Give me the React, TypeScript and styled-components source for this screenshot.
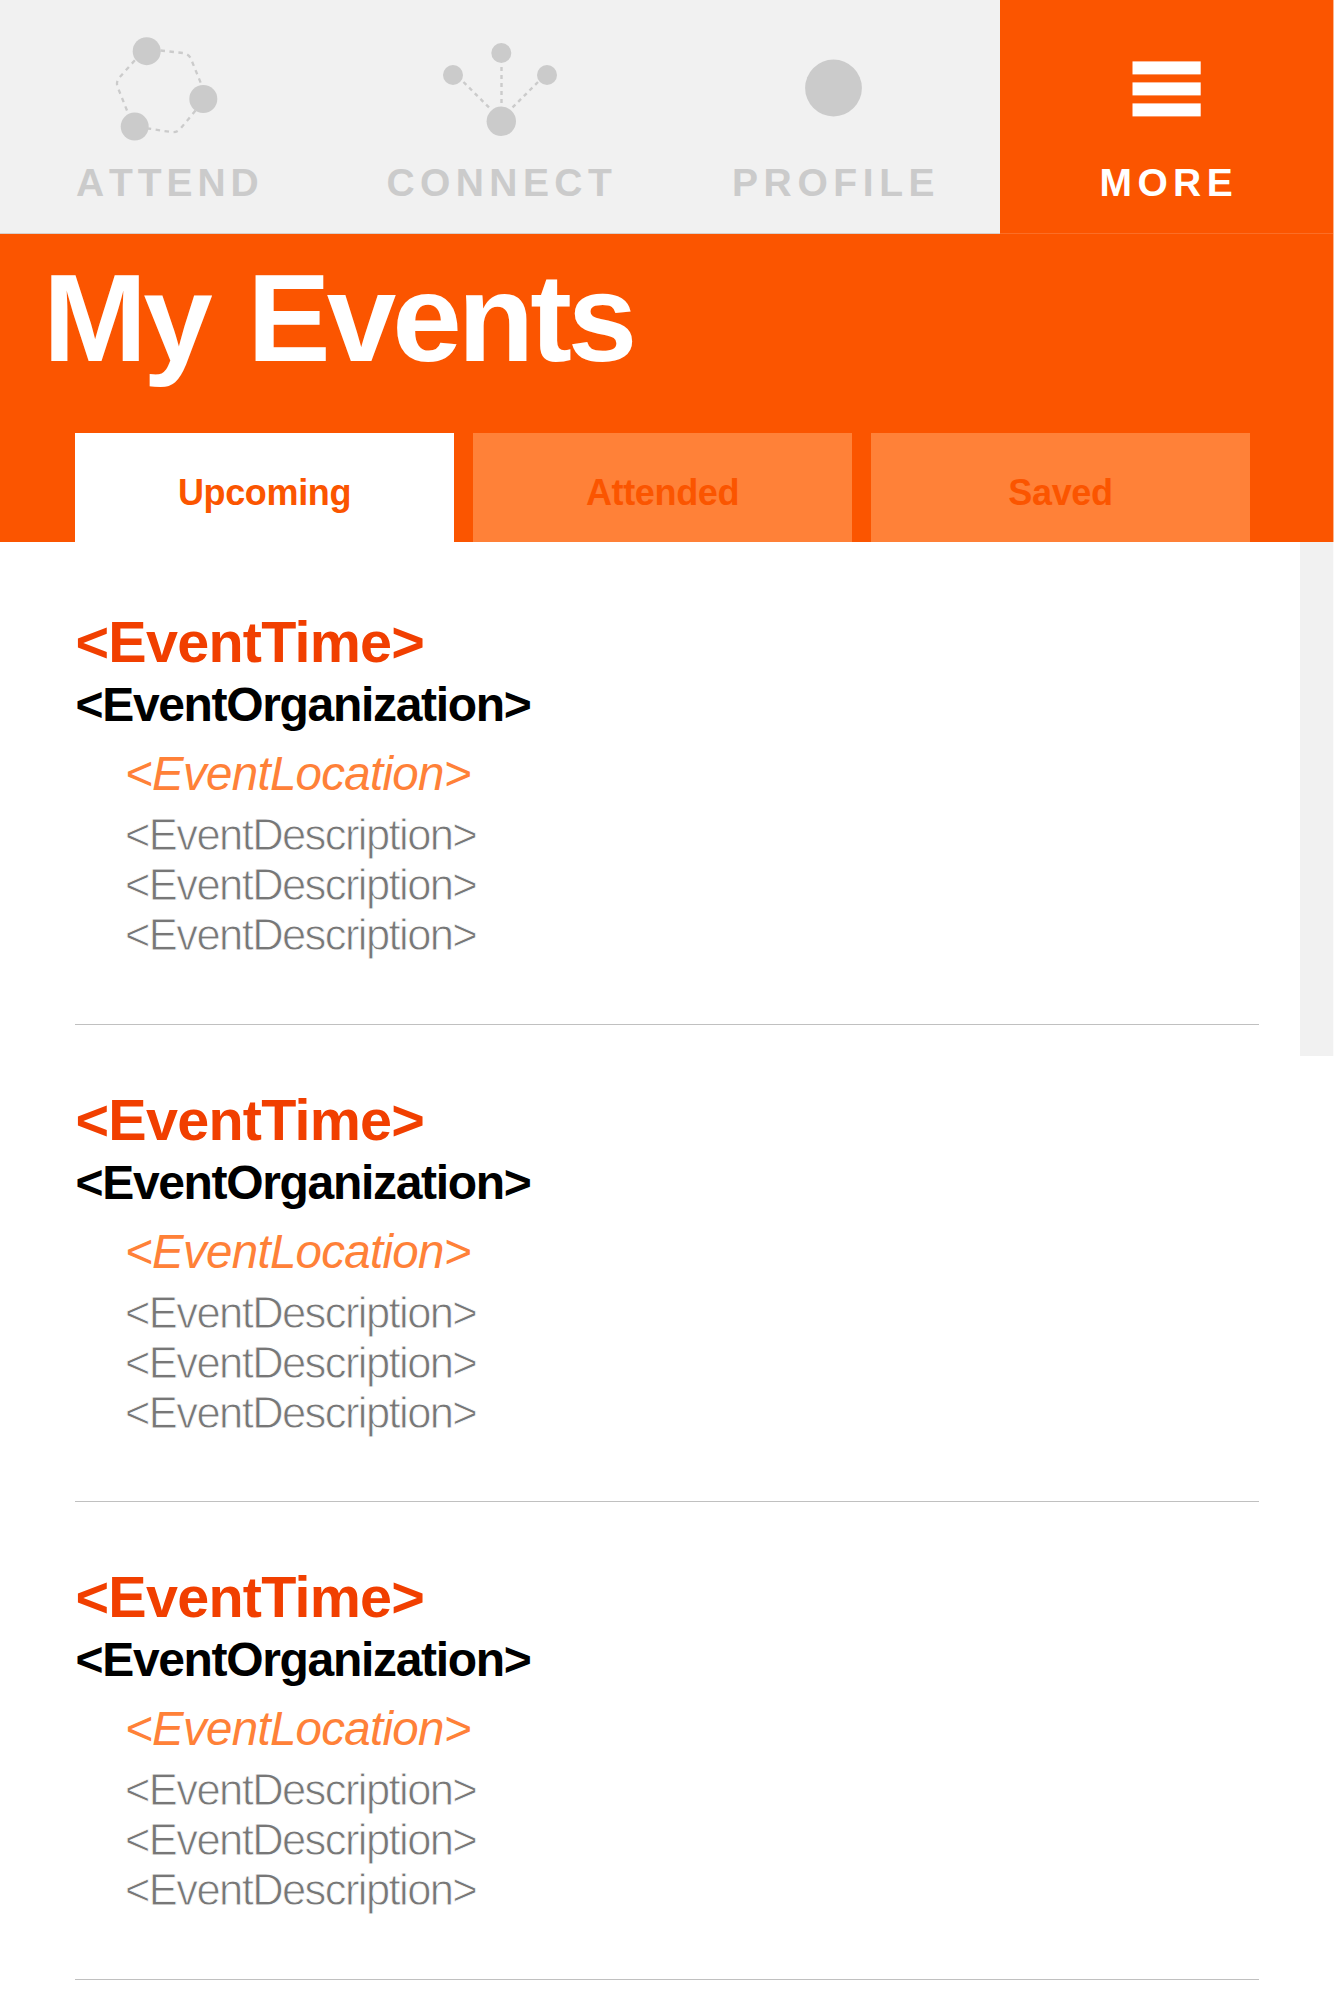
import React from "react";
import styled, { createGlobalStyle } from "styled-components";

const GlobalStyle = createGlobalStyle`
  * { box-sizing: border-box; }
  body {
    margin: 0;
    background: #fff;
    font-family: "Liberation Sans", Arial, Helvetica, sans-serif;
  }
  h1, h2, h3, p { margin: 0; }
`;

const Screen = styled.div`
  width: 1334px;
  height: 2001px;
  overflow: hidden;
  display: flex;
  flex-direction: column;
  background: #fff;
`;

const NavBar = styled.nav`
  display: grid;
  grid-template-columns: 333px 333px 334px 333px;
  height: 234px;
  flex: none;
  background: #f1f1f1;
  border-right: 1px solid #fcb78f;
`;

const NavItem = styled.a<{ $active?: boolean }>`
  display: flex;
  flex-direction: column;
  align-items: flex-start;
  color: ${(p) => (p.$active ? "#fff" : "#cbcbcb")};
  background: ${(p) => (p.$active ? "#fb5500" : "#f1f1f1")};
  border-bottom: 1px solid ${(p) => (p.$active ? "#fb6e26" : "#d8cfcb")};
`;

const NavIcon = styled.svg`
  display: block;
  width: 100%;
  height: 163px;
  flex: none;
  fill: currentColor;
`;

const NavLabel = styled.span<{ $tracking: number; $indent: number }>`
  padding-left: ${(p) => p.$indent}px;
  font-size: 39px;
  line-height: 39px;
  font-weight: 700;
  font-kerning: none;
  white-space: nowrap;
  letter-spacing: ${(p) => p.$tracking}px;
`;

const Header = styled.header`
  display: flex;
  flex-direction: column;
  justify-content: space-between;
  height: 308px;
  flex: none;
  padding-top: 21px;
  background: #fb5500;
  border-right: 1px solid #fcb78f;
`;

const Title = styled.h1`
  padding-left: 43px;
  color: #fff;
  font-size: 125px;
  line-height: 125px;
  font-weight: 700;
  letter-spacing: -4px;
  word-spacing: 8px;
  white-space: nowrap;
`;

const Tabs = styled.div`
  display: flex;
  gap: 19px;
  padding-left: 75px;
`;

const Tab = styled.button<{ $active?: boolean }>`
  width: 379px;
  height: 109px;
  padding: 41px 0 0;
  display: flex;
  justify-content: center;
  align-items: flex-start;
  border: 0;
  background: ${(p) => (p.$active ? "#fff" : "#ff8138")};
  color: #fb5500;
  font: 700 36px/38px "Liberation Sans", Arial, sans-serif;
  letter-spacing: -0.35px;
`;

const Content = styled.main`
  display: flex;
  align-items: flex-start;
  justify-content: space-between;
  flex: 1;
  min-height: 0;
`;

const EventList = styled.section`
  width: 1184px;
  margin-left: 75px;
  padding-top: 5px;
`;

const EventCard = styled.article`
  height: 477.6px;
  padding-top: 67px;
  border-bottom: 1px solid #c0c0c0;
  white-space: nowrap;
`;

const EventTime = styled.h2`
  padding-left: 0.5px;
  color: #f13f00;
  font-size: 57.5px;
  line-height: 56px;
  font-weight: 700;
  letter-spacing: -0.75px;
`;

const EventOrganization = styled.h3`
  margin-top: 11px;
  padding-left: 0.5px;
  color: #000;
  font-size: 48px;
  line-height: 48px;
  font-weight: 700;
  letter-spacing: -1.33px;
`;

const EventLocation = styled.p`
  && {
    margin: 21px 0 0 50px;
  }
  color: #ff8138;
  font-size: 47.5px;
  line-height: 48px;
  font-style: italic;
  letter-spacing: -0.72px;
`;

const EventDescription = styled.div`
  margin: 12px 0 0 50px;
  color: #777;
  font-size: 43.5px;
  line-height: 50px;
  letter-spacing: -1.58px;
  -webkit-text-stroke: 0.8px #fff;
`;

const Scrollbar = styled.aside`
  width: 34px;
  height: 514px;
  background: #f1f1f1;
  border-right: 1px solid #fbfbfb;
`;

const AttendIcon = () => (
  <NavIcon viewBox="0 0 333 163">
    <g fill="none" stroke="currentColor" strokeWidth="2.3" strokeDasharray="4.5 4.5">
      <path d="M160.500 50.500L183 53Q189 54 191 59L202 86" />
      <path d="M195.500 110.500L181 128Q177 133 171 132L148 128.500" />
      <path d="M127 110.500L118 88Q115.500 83 119 78L136 59" />
    </g>
    <circle cx="146.700" cy="51.200" r="14" />
    <circle cx="203.300" cy="99" r="14" />
    <circle cx="134.700" cy="126.600" r="14" />
  </NavIcon>
);

const ConnectIcon = () => (
  <NavIcon viewBox="333 0 333 163">
    <g stroke="currentColor" strokeWidth="2.400" strokeDasharray="4 4">
      <path d="M463.500 82L490 108.500" />
      <path d="M501.500 67V104" />
      <path d="M538 82L511.500 108.500" />
    </g>
    <circle cx="453" cy="75" r="10" />
    <circle cx="501.300" cy="53" r="10" />
    <circle cx="547" cy="75" r="10" />
    <circle cx="501.300" cy="121.300" r="14.700" />
  </NavIcon>
);

const ProfileIcon = () => (
  <NavIcon viewBox="666 0 334 163">
    <circle cx="833.500" cy="88" r="28.400" />
  </NavIcon>
);

const MoreIcon = () => (
  <NavIcon viewBox="1000 0 333 163">
    <rect x="1132.500" y="61.400" width="68.200" height="13" />
    <rect x="1132.500" y="82.400" width="68.200" height="13" />
    <rect x="1132.500" y="103.400" width="68.200" height="13" />
  </NavIcon>
);

const navItems = [
  { label: "ATTEND", icon: <AttendIcon />, tracking: 4.9, indent: 76 },
  { label: "CONNECT", icon: <ConnectIcon />, tracking: 5.4, indent: 53.5 },
  { label: "PROFILE", icon: <ProfileIcon />, tracking: 5.6, indent: 66 },
  { label: "MORE", icon: <MoreIcon />, tracking: 5.4, indent: 99.5, active: true },
];

const tabs = ["Upcoming", "Attended", "Saved"];
const events = [1, 2, 3];

export default function App() {
  return (
    <Screen>
      <GlobalStyle />
      <NavBar>
        {navItems.map((item) => (
          <NavItem key={item.label} $active={item.active}>
            {item.icon}
            <NavLabel $tracking={item.tracking} $indent={item.indent}>
              {item.label}
            </NavLabel>
          </NavItem>
        ))}
      </NavBar>
      <Header>
        <Title>My Events</Title>
        <Tabs>
          {tabs.map((tab, i) => (
            <Tab key={tab} $active={i === 0}>
              {tab}
            </Tab>
          ))}
        </Tabs>
      </Header>
      <Content>
        <EventList>
          {events.map((id) => (
            <EventCard key={id}>
              <EventTime>&lt;EventTime&gt;</EventTime>
              <EventOrganization>&lt;EventOrganization&gt;</EventOrganization>
              <EventLocation>&lt;EventLocation&gt;</EventLocation>
              <EventDescription>
                <p>&lt;EventDescription&gt;</p>
                <p>&lt;EventDescription&gt;</p>
                <p>&lt;EventDescription&gt;</p>
              </EventDescription>
            </EventCard>
          ))}
        </EventList>
        <Scrollbar />
      </Content>
    </Screen>
  );
}
